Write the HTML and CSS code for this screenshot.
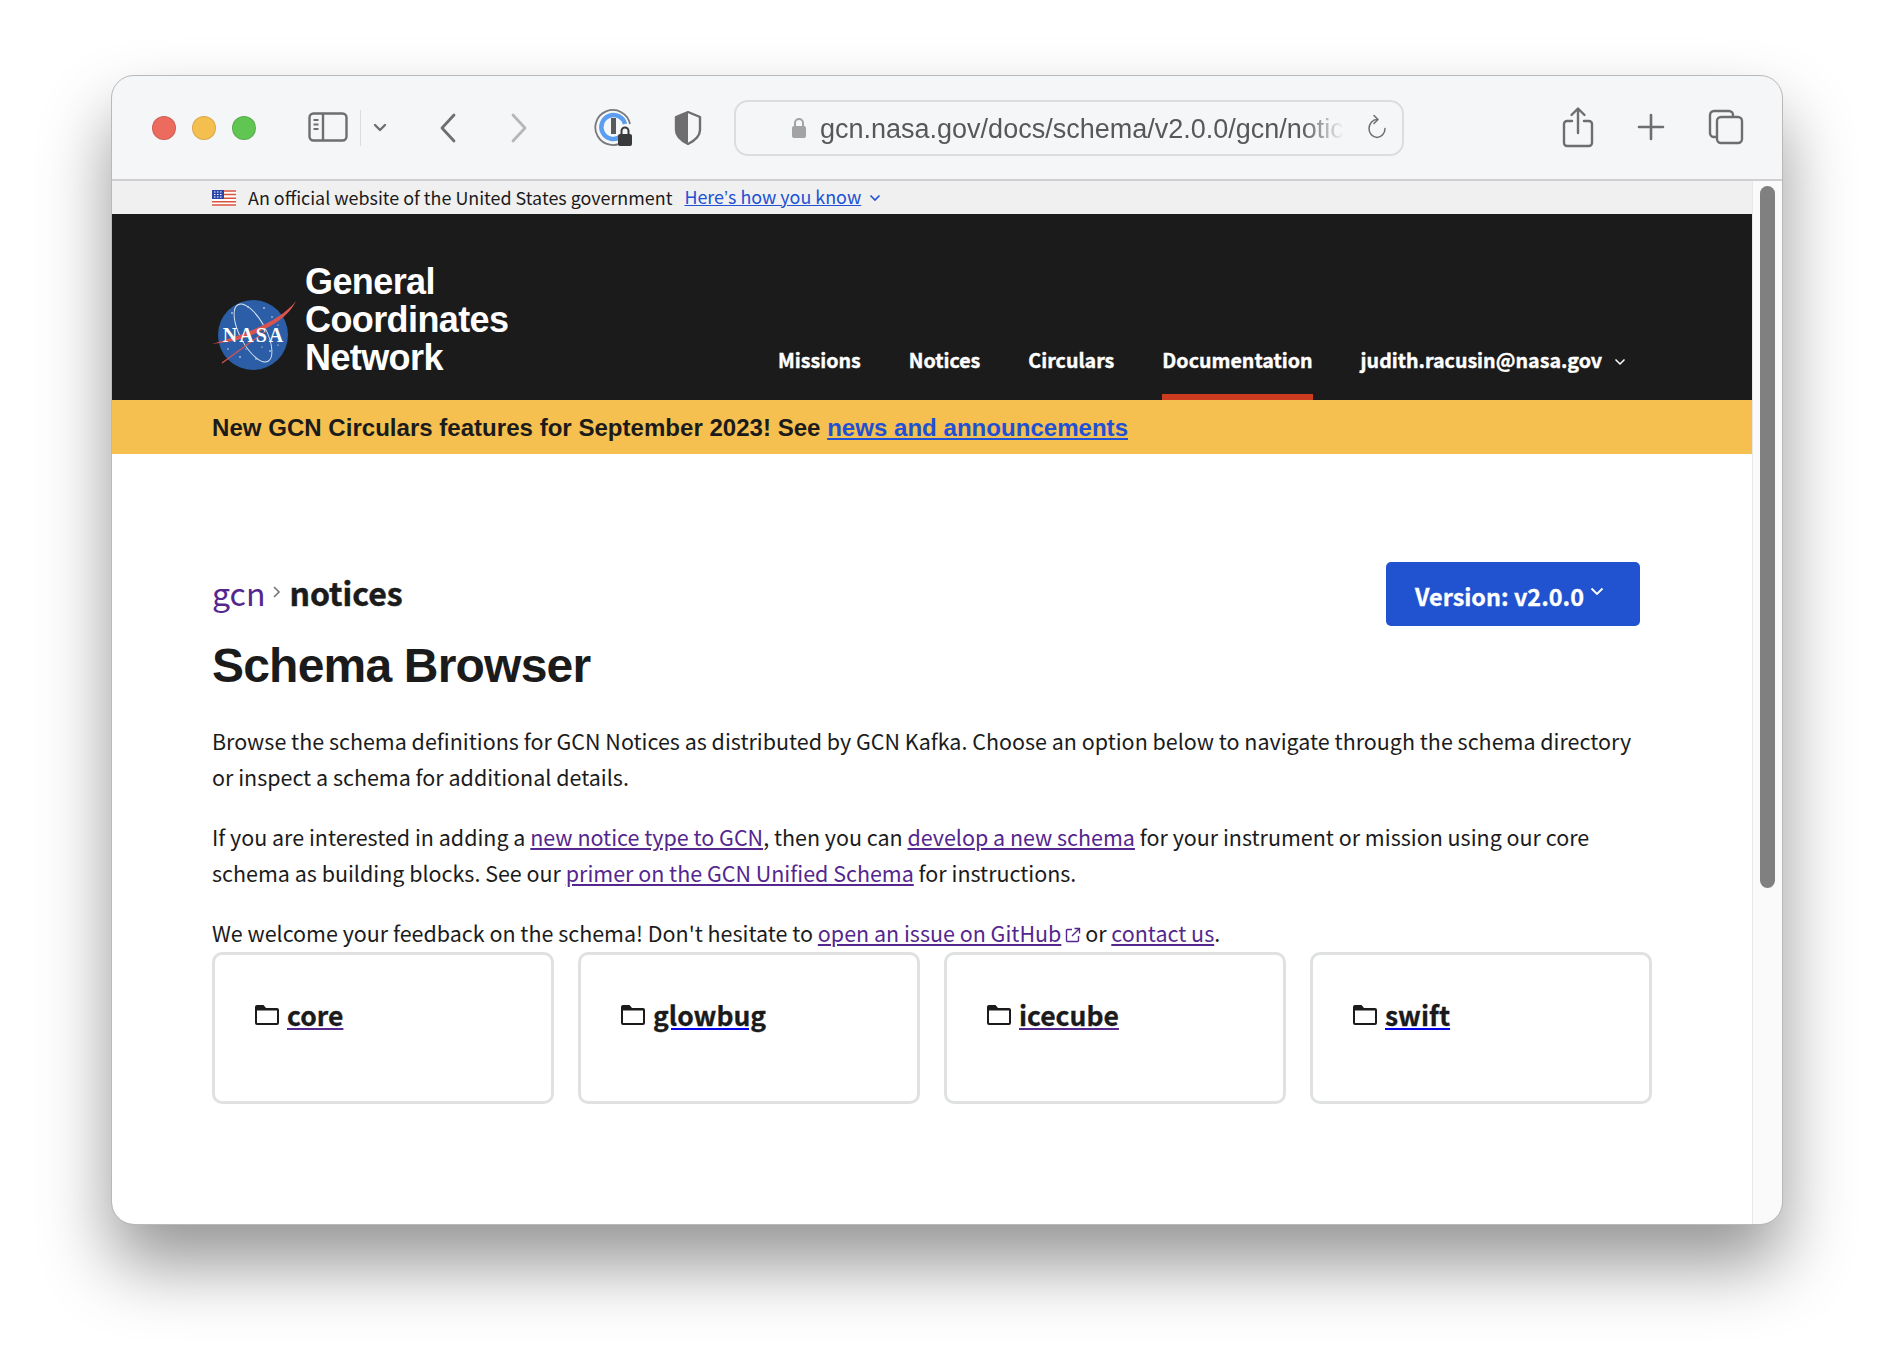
FILE: index.html
```html
<!DOCTYPE html>
<html lang="en">
<head>
    <meta charset="utf-8">
    <title>Schema Browser</title>
    <link rel="stylesheet" href="styles.css">
</head>
<body>
<div class="window">

    <div class="toolbar">
        <span class="dot dot-red"></span>
        <span class="dot dot-yellow"></span>
        <span class="dot dot-green"></span>

        <svg class="tool tool-sidebar" width="40" height="30" viewBox="0 0 40 30" fill="none" stroke="#6e6e70" stroke-width="2.4">
            <rect x="1.5" y="1.5" width="37" height="27" rx="4"/>
            <path d="M15 2v26"/>
            <path d="M5.5 8h5M5.5 12.500h5M5.500 17h5" stroke-width="1.800"/>
        </svg>
        <span class="tool-sep"></span>
        <svg class="tool tool-arrow" width="14" height="10" viewBox="0 0 14 10" fill="none" stroke="#6e6e70" stroke-width="2.400" stroke-linecap="round" stroke-linejoin="round">
            <path d="M2 2l5 5 5-5"/>
        </svg>
        <svg class="tool tool-back" width="18" height="30" viewBox="0 0 18 30" fill="none" stroke="#6e6e70" stroke-width="2.800" stroke-linecap="round" stroke-linejoin="round">
            <path d="M15 2L3 15l12 13"/>
        </svg>
        <svg class="tool tool-forward" width="18" height="30" viewBox="0 0 18 30" fill="none" stroke="#b7b7b9" stroke-width="2.800" stroke-linecap="round" stroke-linejoin="round">
            <path d="M3 2l12 13L3 28"/>
        </svg>
        <svg class="tool tool-pass" width="40" height="40" viewBox="0 0 40 40" fill="none">
            <path d="M31 33A17.500 17.500 0 1 1 37 16" stroke="#77787b" stroke-width="1.800"/>
            <path d="M27 29A12 12 0 1 1 32 16" stroke="#5b9df0" stroke-width="4.500"/>
            <rect x="18" y="10" width="5" height="16" fill="#58595b"/>
            <rect x="25" y="26" width="14" height="12" rx="2" fill="#3a3a3c"/>
            <path d="M28.500 26v-3a3.500 3.500 0 0 1 7 0v3" stroke="#3a3a3c" stroke-width="2"/>
        </svg>
        <svg class="tool tool-shield" width="30" height="36" viewBox="0 0 30 36" fill="none">
            <path d="M15 2L3 7v13c0 7 6 11 12 14z" fill="#6e6e70"/>
            <path d="M15 2l12 5v13c0 7-6 11-12 14-6-3-12-7-12-14V7z" stroke="#6e6e70" stroke-width="2.400" stroke-linejoin="round"/>
        </svg>

        <div class="urlbar">
            <svg class="url-lock" width="16" height="22" viewBox="0 0 16 22" fill="none">
                <rect x="1" y="9" width="14" height="12" rx="2" fill="#a3a3a5"/>
                <path d="M4 9V6a4 4 0 0 1 8 0v3" stroke="#a3a3a5" stroke-width="2"/>
            </svg>
            <span class="url-text">gcn.nasa.gov/docs/schema/v2.0.0/gcn/notices</span>
            <svg class="url-reload" width="20" height="28" viewBox="0 0 20 28" fill="none" stroke="#6e6e70" stroke-width="1.500" stroke-linecap="round" stroke-linejoin="round">
                <path d="M18 14.500A8 9 0 1 1 10 5.500"/>
                <path d="M7 1.500l4 4-4 4"/>
            </svg>
        </div>

        <svg class="tool tool-share" width="32" height="42" viewBox="0 0 32 42" fill="none" stroke="#6e6e70" stroke-width="2.400" stroke-linecap="round" stroke-linejoin="round">
            <path d="M10 15H5a3 3 0 0 0-3 3v19a3 3 0 0 0 3 3h22a3 3 0 0 0 3-3V18a3 3 0 0 0-3-3h-5"/>
            <path d="M16 27V3M9.500 9L16 2.500 22.500 9"/>
        </svg>
        <svg class="tool tool-plus" width="28" height="28" viewBox="0 0 28 28" fill="none" stroke="#6e6e70" stroke-width="2.600" stroke-linecap="round">
            <path d="M14 2v24M2 14h24"/>
        </svg>
        <svg class="tool tool-tabs" width="36" height="36" viewBox="0 0 36 36" fill="none" stroke="#6e6e70" stroke-width="2.400" stroke-linejoin="round">
            <rect x="9" y="8" width="25" height="26" rx="4"/>
            <path d="M9 28H6a4 4 0 0 1-4-4V6a4 4 0 0 1 4-4h15a4 4 0 0 1 4 4v2"/>
        </svg>
    </div>

    <div class="viewport">
        <div class="page">

            <div class="gov-banner">
                <svg class="flag" width="24" height="16" viewBox="0 0 24 16">
                    <rect width="24" height="16" fill="#fff"/>
                    <path d="M0 1h24M0 4.600h24M0 8.200h24M0 11.800h24M0 15h24" stroke="#d9533f" stroke-width="1.500"/>
                    <rect width="12" height="9" fill="#2b45a8"/>
                    <path d="M2 2h8M2 4.500h8M2 7h8" stroke="#fff" stroke-width="1.200" stroke-dasharray="1.500 1.500"/>
                </svg>
                <span class="gov-text">An official website of the United States government</span>
                <a class="gov-link" href="#">Here<span class="apos">’</span>s how you know</a>
                <svg class="gov-chevron" width="12" height="8" viewBox="0 0 12 8" fill="none" stroke="#2150d4" stroke-width="1.600">
                    <path d="M1.500 1.500L6 6l4.500-4.500"/>
                </svg>
            </div>

            <header class="site-header">
                <div class="brand">
                    <svg class="nasa-logo" width="86" height="76" viewBox="0 0 86 76">
                        <circle cx="41" cy="38" r="35" fill="#2b5ea6"/>
                        <g fill="#fff">
                            <circle cx="20" cy="16" r=".8"/><circle cx="36" cy="10" r=".7"/><circle cx="52" cy="11" r=".8"/>
                            <circle cx="60" cy="20" r=".7"/><circle cx="66" cy="28" r=".6"/><circle cx="16" cy="52" r=".7"/>
                            <circle cx="28" cy="60" r=".8"/><circle cx="44" cy="62" r=".7"/><circle cx="58" cy="54" r=".8"/>
                            <circle cx="66" cy="48" r=".6"/><circle cx="34" cy="52" r=".6"/><circle cx="50" cy="50" r=".6"/>
                        </g>
                        <ellipse cx="41" cy="36" rx="13" ry="32" transform="rotate(-28 41 36)" fill="none" stroke="#dfe8f2" stroke-width=".9"/>
                        <path d="M0 47C30 38 66 26 84 4 74 26 42 38 22 44z" fill="#d9534f"/>
                        <path d="M10 66L54 34" stroke="#d9534f" stroke-width="1.300"/>
                        <text class="nasa-word" x="42" y="45">NASA</text>
                    </svg>
                    <div class="brand-name">General<br>Coordinates<br>Network</div>
                </div>
                <nav class="main-nav">
                    <a class="nav-item" href="#">Missions</a>
                    <a class="nav-item" href="#">Notices</a>
                    <a class="nav-item" href="#">Circulars</a>
                    <a class="nav-item nav-current" href="#">Documentation</a>
                    <a class="nav-item nav-user" href="#">judith.racusin@nasa.gov
                        <svg class="nav-chevron" width="12" height="8" viewBox="0 0 12 8" fill="none" stroke="#fff" stroke-width="1.500">
                            <path d="M1.500 1.500L6 6l4.500-4.500"/>
                        </svg>
                    </a>
                </nav>
            </header>

            <div class="announce">New GCN Circulars features for September 2023! See <a href="#">news and announcements</a></div>

            <main class="content">
                <div class="title-row">
                    <div class="crumbs">
                        <a class="crumb-link" href="#">gcn</a>
                        <svg class="crumb-sep" width="10" height="14" viewBox="0 0 10 14" fill="none" stroke="#71767a" stroke-width="1.600">
                            <path d="M2 2l5 5-5 5"/>
                        </svg>
                        <span class="crumb-current">notices</span>
                    </div>
                    <button class="version-btn"><span>Version: v2.0.0</span>
                        <svg width="14" height="9" viewBox="0 0 14 9" fill="none" stroke="#fff" stroke-width="1.800">
                            <path d="M1.500 1.500L7 7l5.500-5.500"/>
                        </svg>
                    </button>
                </div>

                <h1>Schema Browser</h1>

                <p>Browse the schema definitions for GCN Notices as distributed by GCN Kafka. Choose an option below to navigate through the schema directory or inspect a schema for additional details.</p>
                <p>If you are interested in adding a <a href="#">new notice type to GCN</a>, then you can <a href="#">develop a new schema</a> for your instrument or mission using our core schema as building blocks. See our <a href="#">primer on the GCN Unified Schema</a> for instructions.</p>
                <p class="last-para">We welcome your feedback on the schema! Don't hesitate to <a href="#">open an issue on GitHub</a><svg class="ext-icon" width="16" height="16" viewBox="0 0 16 16" fill="none" stroke="#54278f" stroke-width="1.400"><path d="M7 2.500H2.500a1 1 0 0 0-1 1v10a1 1 0 0 0 1 1h10a1 1 0 0 0 1-1V9"/><path d="M9.500 1.500h5v5M14.500 1.500L7 9"/></svg> or <a href="#">contact us</a>.</p>

                <div class="cards">
                    <div class="card">
                        <svg class="folder" width="26" height="22" viewBox="0 0 26 22"><path d="M3 1h6.500l2.500 3h11a2 2 0 0 1 2 2v13a2 2 0 0 1-2 2H3a2 2 0 0 1-2-2V3a2 2 0 0 1 2-2zm0 5.500V18.500a.5.500 0 0 0 .5.500h19a.5.500 0 0 0 .5-.5V6.500z" fill="#1b1b1b"/></svg>
                        <a class="card-link card-purple" href="#"><span>core</span></a>
                    </div>
                    <div class="card">
                        <svg class="folder" width="26" height="22" viewBox="0 0 26 22"><path d="M3 1h6.500l2.500 3h11a2 2 0 0 1 2 2v13a2 2 0 0 1-2 2H3a2 2 0 0 1-2-2V3a2 2 0 0 1 2-2zm0 5.500V18.500a.5.500 0 0 0 .5.500h19a.5.500 0 0 0 .5-.5V6.500z" fill="#1b1b1b"/></svg>
                        <a class="card-link" href="#"><span>glowbug</span></a>
                    </div>
                    <div class="card">
                        <svg class="folder" width="26" height="22" viewBox="0 0 26 22"><path d="M3 1h6.500l2.500 3h11a2 2 0 0 1 2 2v13a2 2 0 0 1-2 2H3a2 2 0 0 1-2-2V3a2 2 0 0 1 2-2zm0 5.500V18.500a.5.500 0 0 0 .5.500h19a.5.500 0 0 0 .5-.5V6.500z" fill="#1b1b1b"/></svg>
                        <a class="card-link card-purple" href="#"><span>icecube</span></a>
                    </div>
                    <div class="card">
                        <svg class="folder" width="26" height="22" viewBox="0 0 26 22"><path d="M3 1h6.500l2.500 3h11a2 2 0 0 1 2 2v13a2 2 0 0 1-2 2H3a2 2 0 0 1-2-2V3a2 2 0 0 1 2-2zm0 5.500V18.500a.5.500 0 0 0 .5.500h19a.5.500 0 0 0 .5-.5V6.500z" fill="#1b1b1b"/></svg>
                        <a class="card-link" href="#"><span>swift</span></a>
                    </div>
                </div>
            </main>
        </div>

        <div class="scrollbar">
            <div class="scroll-thumb"></div>
        </div>
    </div>
</div>
</body>
</html>
```

FILE: styles.css
```css
html, body {
    margin: 0;
    height: 100%;
    background: #fff;
    overflow: hidden;
}

body {
    padding: 76px 0 0 112px;
    box-sizing: border-box;
    font-family: "Noto Sans CJK SC", "Open Sans", sans-serif;
    color: #1b1b1b;
}

.window {
    width: 1670px;
    height: 1148px;
    display: flex;
    flex-direction: column;
    box-sizing: border-box;
    border-radius: 22px;
    overflow: hidden;
    background: #fff;
    outline: 1px solid #b9b9b9;
    box-shadow: 0 40px 70px rgba(0, 0, 0, .42);
}

/* safari toolbar */

.toolbar {
    height: 105px;
    flex: none;
    display: flex;
    align-items: center;
    box-sizing: border-box;
    padding-left: 40px;
    background: #f5f6f8;
    border-bottom: 2px solid #cfcfd1;
}

.dot {
    width: 24px;
    height: 24px;
    flex: none;
    margin-right: 16px;
    box-sizing: border-box;
    border-radius: 50%;
    border: 1px solid rgba(0, 0, 0, .12);
}

.dot-red { background: #ed6a5e; }
.dot-yellow { background: #f5bf4f; }
.dot-green { background: #61c554; }

.tool { flex: none; }

.tool-sidebar {
    margin-left: 36px;
    margin-top: -2px;
}

.tool-sep {
    width: 1px;
    height: 36px;
    margin-left: 12px;
    background: #dcdcde;
}

.tool-arrow { margin-left: 12px; }
.tool-back { margin-left: 52px; }
.tool-forward { margin-left: 53px; }
.tool-pass { margin-left: 65px; }
.tool-shield { margin-left: 40px; }

.urlbar {
    width: 670px;
    height: 56px;
    flex: none;
    margin-left: 31px;
    display: flex;
    align-items: center;
    box-sizing: border-box;
    padding-left: 55px;
    border: 2px solid #dcdde0;
    border-radius: 14px;
}

.url-lock { flex: none; }

.url-text {
    width: 524px;
    margin-left: 13px;
    margin-top: 2px;
    overflow: hidden;
    white-space: nowrap;
    font-family: "Liberation Sans", sans-serif;
    font-size: 27px;
    line-height: 36px;
    color: #58585a;
    -webkit-mask-image: linear-gradient(to right, #000 92%, transparent 100%);
    mask-image: linear-gradient(to right, #000 92%, transparent 100%);
}

.url-reload {
    flex: none;
    margin-left: 23px;
}

.tool-share {
    margin-left: 158px;
    margin-top: -2px;
}

.tool-plus {
    margin-left: 43px;
    margin-top: -2px;
}

.tool-tabs {
    margin-left: 43px;
    margin-top: -2px;
}

/* page */

.viewport {
    flex: 1;
    display: flex;
    min-height: 0;
}

.page {
    flex: 1;
    min-width: 0;
}

.scrollbar {
    width: 30px;
    flex: none;
    box-sizing: border-box;
    padding: 5px 0 0 7px;
    background: #fafafa;
    border-left: 1px solid #e8e8e8;
}

.scroll-thumb {
    width: 15px;
    height: 702px;
    border-radius: 8px;
    background: #808080;
}

.gov-banner {
    height: 33px;
    display: flex;
    align-items: center;
    box-sizing: border-box;
    padding-left: 100px;
    background: #f0f0f0;
    font-size: 17.900px;
    line-height: 31px;
}

.flag { flex: none; }

.gov-text { margin-left: 12px; }

.gov-link {
    margin-left: 12px;
    color: #2150d4;
    text-decoration: underline;
}

.apos { font-family: "Liberation Sans", sans-serif; }

.gov-chevron { margin-left: 8px; }

.site-header {
    height: 186px;
    display: flex;
    box-sizing: border-box;
    padding-left: 100px;
    background: #1b1b1b;
}

.brand {
    display: flex;
    align-items: center;
    width: 566px;
    flex: none;
    padding-top: 22px;
    box-sizing: border-box;
    height: 120px;
    margin-top: 48px;
}

.nasa-logo {
    flex: none;
    margin-right: 7px;
    margin-top: 4px;
}

.nasa-word {
    font-family: "Liberation Serif", serif;
    font-weight: 700;
    font-size: 20px;
    letter-spacing: 2px;
    text-anchor: middle;
    fill: #fff;
}

.brand-name {
    font-family: "Liberation Sans", sans-serif;
    font-weight: 700;
    font-size: 36px;
    line-height: 38px;
    letter-spacing: -.6px;
    color: #fff;
    margin-top: -26px;
}

.main-nav {
    display: flex;
    gap: 48px;
    align-items: stretch;
}

.nav-item {
    display: flex;
    align-items: center;
    gap: 12px;
    box-sizing: border-box;
    height: 186px;
    padding-top: 106px;
    font-size: 19.650px;
    line-height: 30px;
    font-weight: 700;
    color: #fff;
    text-decoration: none;
    white-space: nowrap;
    -webkit-text-stroke: .4px #fff;
}

.nav-chevron { margin-top: 4px; }

.nav-current {
    box-shadow: inset 0 -6px 0 #cd3b20;
}

.announce {
    height: 54px;
    box-sizing: border-box;
    padding-left: 100px;
    background: #f5c04f;
    font-family: "Liberation Sans", sans-serif;
    font-weight: 700;
    font-size: 24.070px;
    line-height: 55px;
}

.announce a {
    color: #2150d4;
    text-decoration: underline;
}

/* content */

.content {
    padding: 108px 0 0 100px;
    width: 1440px;
    box-sizing: border-box;
    font-size: 21.480px;
    line-height: 36px;
}

.title-row {
    display: flex;
    justify-content: space-between;
    align-items: center;
    width: 1428px;
    height: 64px;
}

.crumbs {
    display: flex;
    align-items: center;
    gap: 7px;
    font-size: 32px;
    line-height: 44px;
    margin-top: -5px;
}

.crumb-link {
    color: #54278f;
    text-decoration: none;
}

.crumb-current {
    font-weight: 700;
    -webkit-text-stroke: .5px #1b1b1b;
}

.version-btn {
    width: 254px;
    height: 64px;
    display: flex;
    align-items: center;
    justify-content: center;
    gap: 6px;
    padding: 0 7px 0 0;
    border: 0;
    border-radius: 5px;
    background: #2152d0;
    color: #fff;
    font-family: inherit;
    font-size: 23.400px;
    font-weight: 700;
    -webkit-text-stroke: .3px #fff;
}

.version-btn span { margin-top: 4px; }

.version-btn svg { margin-bottom: 6px; }

h1 {
    margin: 11px 0 0;
    font-family: "Liberation Sans", sans-serif;
    font-size: 48px;
    line-height: 58px;
    font-weight: 700;
    letter-spacing: -.8px;
}

p {
    margin: 24px 0 0;
    width: 1440px;
}

h1 + p { margin-top: 28px; }

.content a:not(.card-link):not(.crumb-link) {
    color: #54278f;
    text-decoration: underline;
}

.ext-icon {
    margin-left: 4px;
    margin-right: -1px;
    vertical-align: -1px;
}

.cards {
    display: grid;
    grid-template-columns: repeat(4, 342px);
    gap: 24px;
    margin-top: 1px;
}

.card {
    height: 152px;
    display: flex;
    align-items: flex-start;
    gap: 7px;
    box-sizing: border-box;
    padding: 39px 0 0 39px;
    border: 3px solid #dfe1e2;
    border-radius: 10px;
}

.folder {
    flex: none;
    margin-top: 10px;
}

.card-link {
    font-size: 26.500px;
    line-height: 42px;
    font-weight: 700;
    color: #0000ee;
    text-decoration: underline;
}

.card-link span {
    color: #1b1b1b;
    -webkit-text-stroke: .3px #1b1b1b;
}

.card-purple { color: #54278f; }
```
